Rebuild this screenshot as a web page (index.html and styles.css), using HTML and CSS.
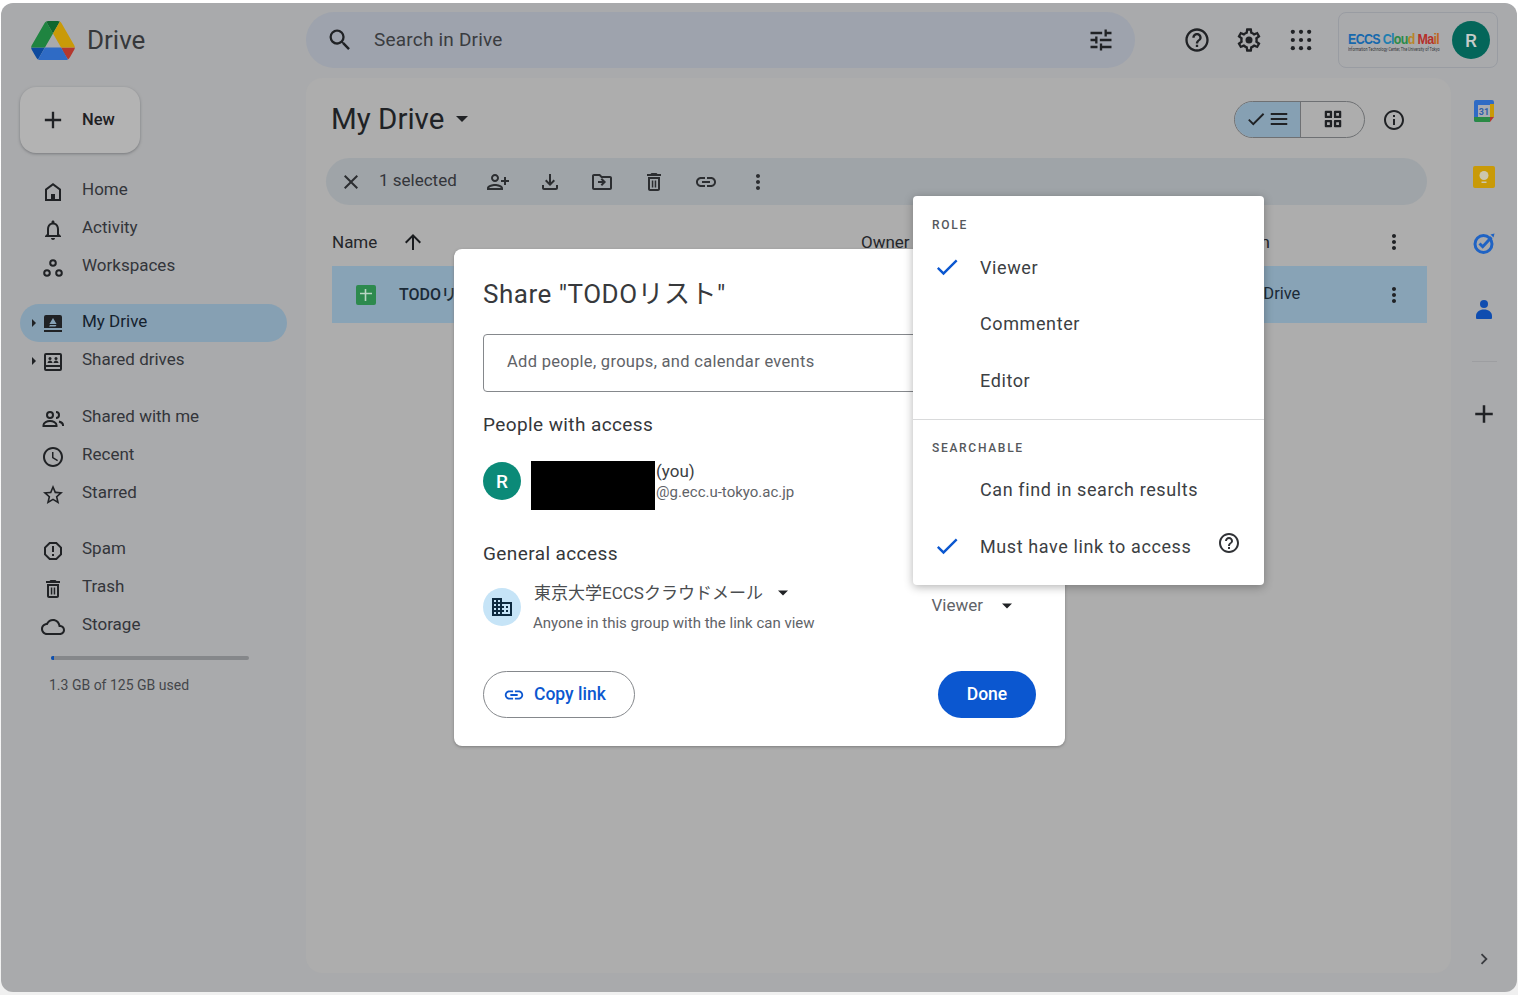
FILE: index.html
```html
<!DOCTYPE html>
<html>
<head>
    <meta charset="utf-8">
    <title>My Drive - Google Drive</title>
    <link rel="stylesheet" href="styles.css">
</head>
<body>
<svg class="sprite" xmlns="http://www.w3.org/2000/svg">
    <symbol id="i-search" viewBox="0 0 24 24"><path d="M15.5 14h-.79l-.28-.27A6.471 6.471 0 0 0 16 9.5 6.5 6.5 0 1 0 9.5 16c1.61 0 3.09-.59 4.23-1.57l.27.28v.79l5 4.99L20.49 19l-4.99-5zm-6 0C7.01 14 5 11.99 5 9.5S7.01 5 9.5 5 14 7.01 14 9.5 11.99 14 9.5 14z"/></symbol>
    <symbol id="i-tune" viewBox="0 0 24 24"><path d="M3 17v2h6v-2H3zM3 5v2h10V5H3zm10 16v-2h8v-2h-8v-2h-2v6h2zM7 9v2H3v2h4v2h2V9H7zm14 4v-2H11v2h10zm-6-4h2V7h4V5h-4V3h-2v6z"/></symbol>
    <symbol id="i-help" viewBox="0 0 24 24"><path d="M11 18h2v-2h-2v2zm1-16C6.48 2 2 6.48 2 12s4.48 10 10 10 10-4.48 10-10S17.52 2 12 2zm0 18c-4.41 0-8-3.59-8-8s3.59-8 8-8 8 3.59 8 8-3.59 8-8 8zm0-14c-2.21 0-4 1.79-4 4h2c0-1.1.9-2 2-2s2 .9 2 2c0 2-3 1.75-3 5h2c0-2.25 3-2.5 3-5 0-2.21-1.79-4-4-4z"/></symbol>
    <symbol id="i-settings" viewBox="0 0 24 24"><path d="M19.43 12.98c.04-.32.07-.64.07-.98 0-.34-.03-.66-.07-.98l2.11-1.65c.19-.15.24-.42.12-.64l-2-3.46c-.09-.16-.26-.25-.44-.25-.06 0-.12.01-.17.03l-2.49 1c-.52-.4-1.08-.73-1.69-.98l-.38-2.65C14.46 2.18 14.25 2 14 2h-4c-.25 0-.46.18-.49.42l-.38 2.65c-.61.25-1.17.59-1.69.98l-2.49-1c-.06-.02-.12-.03-.18-.03-.17 0-.34.09-.43.25l-2 3.46c-.13.22-.07.49.12.64l2.11 1.65c-.04.32-.07.65-.07.98 0 .33.03.66.07.98l-2.11 1.65c-.19.15-.24.42-.12.64l2 3.46c.09.16.26.25.44.25.06 0 .12-.01.17-.03l2.49-1c.52.4 1.08.73 1.69.98l.38 2.65c.03.24.24.42.49.42h4c.25 0 .46-.18.49-.42l.38-2.65c.61-.25 1.17-.59 1.69-.98l2.49 1c.06.02.12.03.18.03.17 0 .34-.09.43-.25l2-3.46c.12-.22.07-.49-.12-.64l-2.11-1.65zm-1.98-1.71c.04.31.05.52.05.73 0 .21-.02.43-.05.73l-.14 1.13.89.7 1.08.84-.7 1.21-1.27-.51-1.04-.42-.9.68c-.43.32-.84.56-1.25.73l-1.06.43-.16 1.13-.2 1.35h-1.4l-.19-1.35-.16-1.13-1.06-.43c-.43-.18-.83-.41-1.23-.71l-.91-.7-1.06.43-1.27.51-.7-1.21 1.08-.84.89-.7-.14-1.13c-.03-.31-.05-.54-.05-.74s.02-.43.05-.73l.14-1.13-.89-.7-1.08-.84.7-1.21 1.27.51 1.04.42.9-.68c.43-.32.84-.56 1.25-.73l1.06-.43.16-1.13.2-1.35h1.39l.19 1.35.16 1.13 1.06.43c.43.18.83.41 1.23.71l.91.7 1.06-.43 1.27-.51.7 1.21-1.07.85-.89.7.14 1.13z"/><circle cx="12" cy="12" r="3"/></symbol>
    <symbol id="i-apps" viewBox="0 0 24 24"><circle cx="5" cy="5" r="1.800"/><circle cx="12" cy="5" r="1.800"/><circle cx="19" cy="5" r="1.800"/><circle cx="5" cy="12" r="1.800"/><circle cx="12" cy="12" r="1.800"/><circle cx="19" cy="12" r="1.800"/><circle cx="5" cy="19" r="1.800"/><circle cx="12" cy="19" r="1.800"/><circle cx="19" cy="19" r="1.800"/></symbol>
    <symbol id="i-add" viewBox="0 0 24 24"><path d="M19 13h-6v6h-2v-6H5v-2h6V5h2v6h6v2z"/></symbol>
    <symbol id="i-home" viewBox="0 0 24 24"><path d="M12 3 4 9v12h16V9l-8-6zm6 16H6v-9l6-4.5 6 4.5v9z"/><path d="M10 14h4v5h-4z"/></symbol>
    <symbol id="i-bell" viewBox="0 0 24 24"><path d="M12 22c1.1 0 2-.9 2-2h-4c0 1.1.9 2 2 2zm6-6v-5c0-3.07-1.63-5.64-4.5-6.32V4c0-.83-.67-1.5-1.5-1.5s-1.5.67-1.5 1.5v.68C7.64 5.36 6 7.92 6 11v5l-2 2v1h16v-1l-2-2zm-2 1H8v-6c0-2.48 1.51-4.5 4-4.5s4 2.02 4 4.5v6z"/></symbol>
    <symbol id="i-workspaces" viewBox="0 0 24 24"><g fill="none" stroke="currentColor" stroke-width="2"><circle cx="12" cy="7" r="2.800"/><circle cx="6" cy="17" r="2.800"/><circle cx="18" cy="17" r="2.800"/></g></symbol>
    <symbol id="i-mydrive" viewBox="0 0 24 24"><path d="M5 3h14a2 2 0 0 1 2 2v11H3V5a2 2 0 0 1 2-2zM3 18h18v2H3z"/><path fill="#86a0b3" d="m12 6 3.600 6H8.400z"/><path fill="#86a0b3" d="M9 13h6.500l-1 1.500H8z"/></symbol>
    <symbol id="i-shared" viewBox="0 0 24 24"><path d="M5 3h14a2 2 0 0 1 2 2v14a2 2 0 0 1-2 2H5a2 2 0 0 1-2-2V5a2 2 0 0 1 2-2zm0 2v10h14V5H5zm0 12v2h14v-2H5z"/><circle cx="9" cy="8.500" r="1.500"/><circle cx="15" cy="8.500" r="1.500"/><path d="M6.500 13c0-1.500 1.500-2.500 2.500-2.500s2.500 1 2.500 2.500zM12.500 13c0-1.500 1.500-2.500 2.500-2.500s2.500 1 2.500 2.500z"/></symbol>
    <symbol id="i-people" viewBox="0 0 24 24"><g fill="none" stroke="currentColor" stroke-width="2"><circle cx="9" cy="8" r="3"/><path d="M2.500 19v-1c0-2.500 3.500-4 6.500-4s6.500 1.500 6.500 4v1z"/><path d="M15 5a3 3 0 0 1 0 6"/><path d="M18 14.500c2 .6 4 1.700 4 3.500v1"/></g></symbol>
    <symbol id="i-clock" viewBox="0 0 24 24"><path d="M11.990 2C6.470 2 2 6.480 2 12s4.470 10 9.990 10C17.520 22 22 17.520 22 12S17.520 2 11.990 2zM12 20c-4.420 0-8-3.580-8-8s3.580-8 8-8 8 3.580 8 8-3.580 8-8 8zm.5-13H11v6l5.250 3.150.75-1.230-4.500-2.670z"/></symbol>
    <symbol id="i-star" viewBox="0 0 24 24"><path d="M22 9.240l-7.190-.62L12 2 9.190 8.630 2 9.240l5.460 4.730L5.820 21 12 17.270 18.180 21l-1.630-7.030L22 9.240zM12 15.400l-3.760 2.270 1-4.280-3.320-2.880 4.380-.38L12 6.100l1.710 4.040 4.380.38-3.320 2.880 1 4.280L12 15.400z"/></symbol>
    <symbol id="i-spam" viewBox="0 0 24 24"><path d="M15.730 3H8.270L3 8.270v7.460L8.270 21h7.460L21 15.730V8.270L15.730 3zM19 14.900L14.900 19H9.100L5 14.900V9.100L9.100 5h5.800L19 9.100v5.800z"/><path d="M11 7h2v6h-2zM11 15h2v2h-2z"/></symbol>
    <symbol id="i-trash" viewBox="0 0 24 24"><path d="M6 19c0 1.100.9 2 2 2h8c1.100 0 2-.9 2-2V7H6v12zM8 9h8v10H8V9zm7.500-5l-1-1h-5l-1 1H5v2h14V4h-3.500z"/><path d="M9.800 10.500h1.500v7H9.800zM12.700 10.500h1.500v7h-1.500z"/></symbol>
    <symbol id="i-cloud" viewBox="0 0 24 24"><path d="M19.350 10.040C18.670 6.590 15.640 4 12 4 9.110 4 6.600 5.640 5.350 8.040 2.340 8.360 0 10.910 0 14c0 3.310 2.690 6 6 6h13c2.760 0 5-2.240 5-5 0-2.640-2.050-4.780-4.650-4.960zM19 18H6c-2.210 0-4-1.790-4-4 0-2.050 1.530-3.760 3.560-3.970l1.070-.11.5-.95C8.080 7.140 9.940 6 12 6c2.620 0 4.880 1.860 5.390 4.430l.3 1.500 1.530.11c1.560.1 2.780 1.410 2.780 2.960 0 1.650-1.350 3-3 3z"/></symbol>
    <symbol id="i-close" viewBox="0 0 24 24"><path d="M19 6.410L17.590 5 12 10.590 6.410 5 5 6.410 10.590 12 5 17.590 6.410 19 12 13.410 17.590 19 19 17.590 13.410 12z"/></symbol>
    <symbol id="i-personadd" viewBox="0 0 24 24"><path transform="matrix(-1 0 0 1 24 0)" d="M15 12c2.210 0 4-1.790 4-4s-1.790-4-4-4-4 1.790-4 4 1.790 4 4 4zm0-6c1.100 0 2 .9 2 2s-.9 2-2 2-2-.9-2-2 .9-2 2-2zm0 8c-2.670 0-8 1.340-8 4v2h16v-2c0-2.660-5.330-4-8-4zm-6 4c.22-.72 3.310-2 6-2 2.700 0 5.800 1.290 6 2H9zm-3-3v-3h3v-2H6V7H4v3H1v2h3v3h2z"/></symbol>
    <symbol id="i-download" viewBox="0 0 24 24"><path d="M18 15v3H6v-3H4v3c0 1.100.9 2 2 2h12c1.100 0 2-.9 2-2v-3h-2zm-1-4l-1.410-1.410L13 12.170V4h-2v8.170L8.410 9.590 7 11l5 5 5-5z"/></symbol>
    <symbol id="i-move" viewBox="0 0 24 24"><path d="M20 6h-8l-2-2H4c-1.100 0-2 .9-2 2v12c0 1.100.9 2 2 2h16c1.100 0 2-.9 2-2V8c0-1.100-.9-2-2-2zm0 12H4V6h5.170l2 2H20v10zm-7.990-2l4-4-4-4-1.400 1.410L12.200 11H8v2h4.200l-1.600 1.600z"/></symbol>
    <symbol id="i-link" viewBox="0 0 24 24"><path d="M3.900 12c0-1.710 1.390-3.100 3.100-3.100h4V7H7c-2.760 0-5 2.240-5 5s2.240 5 5 5h4v-1.900H7c-1.710 0-3.100-1.390-3.100-3.100zM8 13h8v-2H8v2zm9-6h-4v1.900h4c1.710 0 3.100 1.390 3.100 3.100s-1.390 3.100-3.100 3.100h-4V17h4c2.760 0 5-2.240 5-5s-2.240-5-5-5z"/></symbol>
    <symbol id="i-more" viewBox="0 0 24 24"><path d="M12 8c1.100 0 2-.9 2-2s-.9-2-2-2-2 .9-2 2 .9 2 2 2zm0 2c-1.100 0-2 .9-2 2s.9 2 2 2 2-.9 2-2-.9-2-2-2zm0 6c-1.100 0-2 .9-2 2s.9 2 2 2 2-.9 2-2-.9-2-2-2z"/></symbol>
    <symbol id="i-up" viewBox="0 0 24 24"><path d="M4 12l1.410 1.410L11 7.830V20h2V7.830l5.580 5.590L20 12l-8-8-8 8z"/></symbol>
    <symbol id="i-check" viewBox="0 0 24 24"><path d="M9 16.170L4.830 12l-1.420 1.410L9 19 21 7l-1.410-1.410z"/></symbol>
    <symbol id="i-menu" viewBox="0 0 24 24"><path d="M3 18.500h18v-2.200H3v2.200zm0-5.400h18v-2.200H3v2.200zM3 5.500v2.200h18V5.500H3z"/></symbol>
    <symbol id="i-grid" viewBox="0 0 24 24"><path d="M4 3h6a1 1 0 0 1 1 1v6a1 1 0 0 1-1 1H4a1 1 0 0 1-1-1V4a1 1 0 0 1 1-1zm1.500 2.500v3h3v-3h-3zM14 3h6a1 1 0 0 1 1 1v6a1 1 0 0 1-1 1h-6a1 1 0 0 1-1-1V4a1 1 0 0 1 1-1zm1.500 2.500v3h3v-3h-3zM4 13h6a1 1 0 0 1 1 1v6a1 1 0 0 1-1 1H4a1 1 0 0 1-1-1v-6a1 1 0 0 1 1-1zm1.500 2.500v3h3v-3h-3zM14 13h6a1 1 0 0 1 1 1v6a1 1 0 0 1-1 1h-6a1 1 0 0 1-1-1v-6a1 1 0 0 1 1-1zm1.500 2.500v3h3v-3h-3z"/></symbol>
    <symbol id="i-info" viewBox="0 0 24 24"><path d="M11 7h2v2h-2zm0 4h2v6h-2zm1-9C6.480 2 2 6.480 2 12s4.480 10 10 10 10-4.480 10-10S17.520 2 12 2zm0 18c-4.410 0-8-3.590-8-8s3.590-8 8-8 8 3.590 8 8-3.590 8-8 8z"/></symbol>
    <symbol id="i-domain" viewBox="0 0 24 24"><path d="M12 7V3H2v18h20V7H12zM6 19H4v-2h2v2zm0-4H4v-2h2v2zm0-4H4V9h2v2zm0-4H4V5h2v2zm4 12H8v-2h2v2zm0-4H8v-2h2v2zm0-4H8V9h2v2zm0-4H8V5h2v2zm10 12h-8v-2h2v-2h-2v-2h2v-2h-2V9h8v10zm-2-8h-2v2h2v-2zm0 4h-2v2h2v-2z"/></symbol>
    <symbol id="i-chevron" viewBox="0 0 24 24"><path d="M8.590 16.590L13.170 12 8.590 7.410 10 6l6 6-6 6z"/></symbol>
    <symbol id="i-caret" viewBox="0 0 24 24"><path d="M6 9h12l-6 6z"/></symbol>
</svg>

<div class="frame">
    <header class="topbar">
        <div class="brand">
            <svg class="drive-logo" viewBox="0 0 87.300 78">
                <path d="m6.600 66.850 3.850 6.650c.8 1.400 1.950 2.500 3.300 3.300l13.750-23.800h-27.500c0 1.550.4 3.100 1.200 4.500z" fill="#0d4a9e"/>
                <path d="m43.650 25-13.750-23.800c-1.350.8-2.500 1.900-3.300 3.300l-25.400 44a9.060 9.060 0 0 0 -1.200 4.500h27.500z" fill="#1f8440"/>
                <path d="m73.550 76.800c1.350-.8 2.500-1.900 3.300-3.300l1.600-2.750 7.650-13.250c.8-1.400 1.200-2.950 1.200-4.500h-27.502l5.852 11.500z" fill="#b4382e"/>
                <path d="m43.650 25 13.750-23.800c-1.350-.8-2.900-1.200-4.500-1.200h-18.500c-1.600 0-3.150.45-4.500 1.200z" fill="#10672f"/>
                <path d="m59.800 53h-32.300l-13.750 23.800c1.350.8 2.900 1.200 4.500 1.200h50.800c1.600 0 3.150-.45 4.500-1.200z" fill="#2f6bc5"/>
                <path d="m73.400 26.500-12.700-22c-.8-1.400-1.950-2.500-3.300-3.300l-13.750 23.800 16.150 28h27.450c0-1.550-.4-3.100-1.200-4.500z" fill="#c99a08"/>
            </svg>
            <span class="brand-name">Drive</span>
        </div>
        <div class="search">
            <svg class="icon big"><use href="#i-search"/></svg>
            <span class="search-text">Search in Drive</span>
            <svg class="icon big"><use href="#i-tune"/></svg>
        </div>
        <div class="top-icons">
            <svg class="icon big"><use href="#i-help"/></svg>
            <svg class="icon big"><use href="#i-settings"/></svg>
            <svg class="icon big"><use href="#i-apps"/></svg>
        </div>
        <div class="account">
            <div class="org">
                <div class="org-name"><span class="c1">ECCS</span> <span class="c2">Cl</span><span class="c3">ou</span><span class="c4">d</span> <span class="c5">Ma</span><span class="c6">il</span></div>
                <div class="org-sub">Information Technology Center, The University of Tokyo</div>
            </div>
            <div class="avatar dark">R</div>
        </div>
    </header>

    <div class="workspace">
        <nav class="sidebar">
            <button class="new-btn"><svg class="icon plus"><use href="#i-add"/></svg>New</button>
            <div class="nav-group">
                <div class="nav-item"><svg class="icon"><use href="#i-home"/></svg>Home</div>
                <div class="nav-item"><svg class="icon"><use href="#i-bell"/></svg>Activity</div>
                <div class="nav-item"><svg class="icon"><use href="#i-workspaces"/></svg>Workspaces</div>
            </div>
            <div class="nav-group tight">
                <div class="nav-item active"><span class="tree-caret"></span><svg class="icon"><use href="#i-mydrive"/></svg>My Drive</div>
                <div class="nav-item"><span class="tree-caret"></span><svg class="icon"><use href="#i-shared"/></svg>Shared drives</div>
            </div>
            <div class="nav-group tight">
                <div class="nav-item"><svg class="icon"><use href="#i-people"/></svg>Shared with me</div>
                <div class="nav-item"><svg class="icon"><use href="#i-clock"/></svg>Recent</div>
                <div class="nav-item"><svg class="icon"><use href="#i-star"/></svg>Starred</div>
            </div>
            <div class="nav-group">
                <div class="nav-item"><svg class="icon"><use href="#i-spam"/></svg>Spam</div>
                <div class="nav-item"><svg class="icon"><use href="#i-trash"/></svg>Trash</div>
                <div class="nav-item"><svg class="icon"><use href="#i-cloud"/></svg>Storage</div>
            </div>
            <div class="storage-bar"><div class="storage-fill"></div></div>
            <div class="storage-text">1.3 GB of 125 GB used</div>
        </nav>

        <main class="content">
            <div class="title-row">
                <h1 class="page-title">My Drive</h1>
                <svg class="icon title-caret"><use href="#i-caret"/></svg>
                <div class="view-toggle">
                    <div class="view-opt on"><svg class="icon small"><use href="#i-check"/></svg><svg class="icon small"><use href="#i-menu"/></svg></div>
                    <div class="view-opt"><svg class="icon small"><use href="#i-grid"/></svg></div>
                </div>
                <svg class="icon info"><use href="#i-info"/></svg>
            </div>

            <div class="selection-bar">
                <svg class="icon"><use href="#i-close"/></svg>
                <span class="sel-count">1 selected</span>
                <svg class="icon"><use href="#i-personadd"/></svg>
                <svg class="icon"><use href="#i-download"/></svg>
                <svg class="icon"><use href="#i-move"/></svg>
                <svg class="icon"><use href="#i-trash"/></svg>
                <svg class="icon"><use href="#i-link"/></svg>
                <svg class="icon"><use href="#i-more"/></svg>
            </div>

            <div class="file-head">
                <div class="col-name">Name <svg class="icon sort"><use href="#i-up"/></svg></div>
                <div class="col-owner">Owner</div>
                <div class="col-loc">Location</div>
                <svg class="icon"><use href="#i-more"/></svg>
            </div>
            <div class="file-row">
                <div class="col-name">
                    <svg class="sheet-icon" viewBox="0 0 20 20"><rect width="20" height="20" rx="2" fill="#2d8a4e"/><path d="M4 8.500h12M9.500 4v12" stroke="#b9d6c3" stroke-width="1.600" fill="none"/></svg>
                    <span class="file-name">TODOリスト</span>
                </div>
                <div class="col-owner">me</div>
                <div class="col-loc"><svg class="icon small"><use href="#i-mydrive"/></svg><span class="file-loc">My Drive</span></div>
                <svg class="icon"><use href="#i-more"/></svg>
            </div>
        </main>

        <aside class="rail">
            <svg class="rail-icon" viewBox="0 0 24 24">
                <path d="M2 3a2 2 0 0 1 2-2h16a2 2 0 0 1 2 2v15h-4v5H4a2 2 0 0 1-2-2z" fill="#2f6bc5"/>
                <rect x="6" y="6" width="12" height="12" fill="#a9acb2"/>
                <path d="M18 5h4v13h-4z" fill="#c99a08"/><path d="M2 18h16v5H4a2 2 0 0 1-2-2z" fill="#2a8a45"/><path d="M18 18h4l-4 5z" fill="#b4382e"/>
                <text x="12" y="15.500" class="cal-day">31</text>
            </svg>
            <svg class="rail-icon" viewBox="0 0 24 24">
                <rect x="1" y="1" width="22" height="22" rx="2" fill="#c99a08"/>
                <circle cx="12" cy="10.500" r="4.500" fill="#ccc6ae"/><rect x="9.500" y="16.500" width="5" height="1.500" fill="#ccc6ae"/>
            </svg>
            <svg class="rail-icon" viewBox="0 0 24 24">
                <circle cx="11.500" cy="13" r="8.500" fill="none" stroke="#1f63c4" stroke-width="3"/>
                <path d="M7.500 12.500l3.200 3.200 8.800-9.500" fill="none" stroke="#1f63c4" stroke-width="3"/>
                <path d="M16.500 2.500 23 2l-.5 6z" fill="#a9aaac"/><path d="M18.500 3.500 22.500 2.500l-1 4z" fill="#1f63c4"/>
            </svg>
            <svg class="rail-icon" viewBox="0 0 24 24">
                <circle cx="12" cy="7" r="4" fill="#0f4db0"/>
                <path d="M4 21v-2c0-4 3.500-6.500 8-6.500s8 2.500 8 6.500v2a1 1 0 0 1-1 1H5a1 1 0 0 1-1-1z" fill="#0f4db0"/>
            </svg>
            <div class="rail-line"></div>
            <svg class="icon rail-add"><use href="#i-add"/></svg>
            <svg class="icon small rail-chevron"><use href="#i-chevron"/></svg>
        </aside>
    </div>
</div>

<div class="share-dialog">
    <h2 class="share-title">Share "TODOリスト"</h2>
    <div class="share-input">Add people, groups, and calendar events</div>
    <div class="share-heading first">People with access</div>
    <div class="person">
        <div class="avatar teal">R</div>
        <div class="redacted"></div>
        <div class="person-text">
            <div class="person-you">(you)</div>
            <div class="person-mail">@g.ecc.u-tokyo.ac.jp</div>
        </div>
    </div>
    <div class="share-heading second">General access</div>
    <div class="access">
        <div class="access-icon"><svg class="icon"><use href="#i-domain"/></svg></div>
        <div class="access-text">
            <div class="access-name"><span class="access-label">東京大学ECCSクラウドメール</span><svg class="icon caret"><use href="#i-caret"/></svg></div>
            <div class="access-sub">Anyone in this group with the link can view</div>
        </div>
        <div class="access-role">Viewer<svg class="icon caret role-caret"><use href="#i-caret"/></svg></div>
    </div>
    <div class="share-foot">
        <button class="copy-btn"><svg class="icon"><use href="#i-link"/></svg>Copy link</button>
        <button class="done-btn">Done</button>
    </div>
</div>

<div class="role-menu">
    <div class="menu-section">
        <div class="menu-label">ROLE</div>
        <div class="menu-item"><svg class="icon check"><use href="#i-check"/></svg>Viewer</div>
        <div class="menu-item"><span class="check"></span>Commenter</div>
        <div class="menu-item"><span class="check"></span>Editor</div>
    </div>
    <div class="menu-section second">
        <div class="menu-label">SEARCHABLE</div>
        <div class="menu-item"><span class="check"></span>Can find in search results</div>
        <div class="menu-item"><svg class="icon check"><use href="#i-check"/></svg>Must have link to access<svg class="icon menu-help"><use href="#i-help"/></svg></div>
    </div>
</div>
</body>
</html>
```

FILE: styles.css
```css
html, body {
    margin: 0;
    padding: 0;
    height: 995px;
    overflow: hidden;
}
body {
    background: linear-gradient(#fff, #f0f0f0);
    font-family: Roboto, "Noto Sans CJK JP", sans-serif;
    color: #2f3134;
}
.sprite {
    display: none;
}
.icon {
    width: 24px;
    height: 24px;
    flex: none;
    fill: #202225;
    color: #202225;
}
.icon.big {
    width: 28px;
    height: 28px;
}
.icon.small {
    width: 22px;
    height: 22px;
}

.frame {
    margin: 3px 1px;
    height: 989px;
    display: flex;
    flex-direction: column;
    background: #a9aaac;
    border-radius: 12px;
    overflow: hidden;
}

/* top bar */
.topbar {
    height: 74px;
    flex: none;
    display: flex;
    align-items: center;
}
.brand {
    width: 305px;
    flex: none;
    padding-left: 30px;
    box-sizing: border-box;
    display: flex;
    align-items: center;
}
.drive-logo {
    width: 44px;
    height: 39px;
}
.brand-name {
    margin-left: 12px;
    font-size: 26px;
    color: #36383b;
}
.search {
    width: 829px;
    height: 56px;
    flex: none;
    box-sizing: border-box;
    padding: 0 20px;
    display: flex;
    align-items: center;
    background: #9ea3ad;
    border-radius: 28px;
}
.search-text {
    margin: -2px 0 0 20px;
    flex: 1;
    font-size: 19px;
    letter-spacing: .2px;
    color: #3a3c40;
}
.top-icons {
    margin-left: 48px;
    display: flex;
    gap: 24px;
}
.account {
    margin-left: 23px;
    width: 160px;
    height: 56px;
    flex: none;
    box-sizing: border-box;
    border: 1px solid #999ca2;
    border-radius: 8px;
    padding: 0 7px 0 9px;
    display: flex;
    align-items: center;
    justify-content: space-between;
}
.org {
    width: 92px;
    padding-top: 3px;
    overflow: hidden;
}
.org-name {
    font-family: "Liberation Sans", sans-serif;
    font-size: 15px;
    font-weight: bold;
    line-height: 15px;
    letter-spacing: -.8px;
    white-space: nowrap;
    transform: scaleX(.83);
    transform-origin: left;
}
.org-sub {
    font-size: 5px;
    line-height: 6px;
    white-space: nowrap;
    color: #33353a;
    transform: scaleX(.75);
    transform-origin: left;
}
.c1 { color: #1668ad; }
.c2 { color: #1f7fb0; }
.c3 { color: #2b8a4a; }
.c4 { color: #b8862a; }
.c5 { color: #b5302a; }
.c6 { color: #c0651f; }

.avatar {
    width: 38px;
    height: 38px;
    flex: none;
    border-radius: 50%;
    display: flex;
    align-items: center;
    justify-content: center;
    font-size: 19px;
    font-weight: 500;
}
.avatar.dark {
    background: #04665a;
    color: #c6cbc9;
}
.avatar.teal {
    background: #0b8a78;
    color: #fff;
}

/* columns under the top bar */
.workspace {
    flex: 1;
    display: flex;
    min-height: 0;
    margin-top: 1px;
}
.sidebar {
    width: 305px;
    flex: none;
    box-sizing: border-box;
    padding: 9px 0 0 19px;
}
.new-btn {
    width: 120px;
    height: 66px;
    display: flex;
    align-items: center;
    padding: 0 0 2px 19px;
    border: 0;
    border-radius: 16px;
    background: #b3b3b3;
    box-shadow: 0 1px 3px #77797c;
    font: 500 16.500px Roboto, sans-serif;
    color: #1e2023;
}
.plus {
    width: 28px;
    height: 28px;
    margin: 2px 15px 0 0;
}
.nav-group {
    margin-bottom: 19px;
}
.nav-group.tight + .nav-group.tight {
    margin-bottom: 18px;
}
.new-btn + .nav-group {
    margin-top: 19px;
    margin-bottom: 18px;
}
.nav-item {
    position: relative;
    width: 267px;
    height: 38px;
    box-sizing: border-box;
    padding: 0 0 4px 21px;
    display: flex;
    align-items: center;
    gap: 17px;
    font-size: 17px;
    line-height: 34px;
    color: #33353a;
    border-radius: 19px;
}
.nav-item.active {
    background: #86a0b3;
    color: #15222e;
}
.nav-item .icon {
    margin-top: 6px;
}
.tree-caret {
    position: absolute;
    left: 12px;
    top: 15px;
    border-left: 4px solid #202225;
    border-top: 4px solid transparent;
    border-bottom: 4px solid transparent;
}
.storage-bar {
    width: 198px;
    height: 4px;
    margin: -8px 0 0 31px;
    background: #85878a;
    border-radius: 2px;
    overflow: hidden;
}
.storage-fill {
    width: 3px;
    height: 4px;
    background: #0b4fb0;
}
.storage-text {
    margin: 16px 0 0 29px;
    font-size: 14px;
    line-height: 18px;
    color: #44464a;
}

/* main panel */
.content {
    flex: 1;
    margin-bottom: 19px;
    box-sizing: border-box;
    padding: 19px 24px 0 26px;
    background: #adadad;
    border-radius: 16px;
}
.title-row {
    height: 44px;
    display: flex;
    align-items: center;
}
.page-title {
    margin: 0 0 0 -1px;
    font-size: 29.500px;
    font-weight: 400;
    color: #202225;
}
.title-caret {
    margin-left: 6px;
}
.view-toggle {
    margin-left: auto;
    width: 131px;
    height: 37px;
    box-sizing: border-box;
    display: flex;
    border: 1px solid #6e7073;
    border-radius: 19px;
    overflow: hidden;
}
.view-opt {
    flex: 1;
    display: flex;
    align-items: center;
    justify-content: center;
    gap: 1px;
}
.view-opt.on {
    flex: none;
    width: 65px;
    background: #86a0b3;
    border-right: 1px solid #6e7073;
}
.info {
    margin: 2px 21px 0 17px;
}
.selection-bar {
    height: 47px;
    margin: 17px 0 0 -6px;
    padding-left: 13px;
    display: flex;
    align-items: center;
    gap: 28px;
    background: #9fa4a8;
    border-radius: 24px;
}
.selection-bar .icon {
    fill: #2c2e31;
}
.sel-count {
    margin: -3px 1px 0 -12px;
    font-size: 17px;
    color: #33353a;
}
.file-head, .file-row {
    display: flex;
    align-items: center;
    box-sizing: border-box;
    padding-right: 21px;
}
.file-head {
    height: 46px;
    margin-top: 15px;
    padding-bottom: 2px;
    font-size: 17px;
    color: #24262a;
}
.file-row {
    height: 57px;
    background: #88a3b6;
    font-size: 16.500px;
    color: #1b2a36;
}
.col-name {
    width: 529px;
    flex: none;
    display: flex;
    align-items: center;
}
.col-owner {
    width: 343px;
    flex: none;
}
.col-loc {
    flex: 1;
    display: flex;
    align-items: center;
    gap: 8px;
}
.file-row .col-name {
    padding-left: 24px;
    box-sizing: border-box;
    gap: 23px;
}
.file-row .col-loc {
    padding-left: 3px;
}
.file-name {
    margin-top: -3px;
    font-size: 16px;
    font-weight: 500;
}
.file-loc {
    margin-top: -3px;
}
.sort {
    margin-left: 24px;
    fill: #1a1c1f;
}
.sheet-icon {
    width: 20px;
    height: 20px;
    flex: none;
}

/* right rail */
.rail {
    width: 66px;
    flex: none;
    box-sizing: border-box;
    padding: 21px 0 22px;
    display: flex;
    flex-direction: column;
    align-items: center;
    gap: 42px;
}
.rail-icon {
    width: 24px;
    height: 24px;
    flex: none;
}
.cal-day {
    font: bold 9px Roboto, sans-serif;
    text-anchor: middle;
    fill: #2f5fa8;
}
.rail-line {
    width: 25px;
    height: 1px;
    margin-top: -2px;
    background: #9d9ea1;
}
.rail-add {
    width: 30px;
    height: 30px;
    margin-top: -5px;
}
.rail-chevron {
    margin-top: auto;
    fill: #3a3c40;
}

/* share dialog, lies over the page */
.share-dialog {
    position: absolute;
    left: 454px;
    top: 249px;
    width: 611px;
    height: 497px;
    box-sizing: border-box;
    padding: 29px 29px 0;
    background: #fff;
    border-radius: 8px;
    box-shadow: 0 1px 3px #7d7d7d;
    color: #3c4043;
}
.share-title {
    margin: 0;
    font-size: 26px;
    font-weight: 400;
    letter-spacing: .5px;
    line-height: 32px;
    color: #37393c;
}
.share-input {
    height: 58px;
    margin-top: 24px;
    box-sizing: border-box;
    padding: 0 0 3px 23px;
    display: flex;
    align-items: center;
    border: 1px solid #85888c;
    border-radius: 4px;
    font-size: 16.500px;
    letter-spacing: .3px;
    color: #5f6368;
}
.share-heading {
    font-size: 19px;
    line-height: 24px;
    letter-spacing: .4px;
    color: #35373a;
}
.share-heading.first {
    margin-top: 21px;
}
.share-heading.second {
    margin-top: 32px;
}
.person {
    display: flex;
    height: 49px;
    margin-top: 24px;
}
.person .avatar {
    margin-top: 1px;
}
.redacted {
    width: 124px;
    height: 49px;
    margin-left: 10px;
    background: #000;
}
.person-text {
    margin-left: 1px;
}
.person-you {
    font-size: 17px;
    line-height: 20px;
}
.person-mail {
    margin-top: 1px;
    font-size: 15px;
    line-height: 20px;
    color: #5f6368;
}
.access {
    display: flex;
    align-items: center;
    margin-top: 15px;
}
.access-icon {
    width: 38px;
    height: 38px;
    flex: none;
    display: flex;
    align-items: center;
    justify-content: center;
    border-radius: 50%;
    background: #c6e4f7;
}
.access-icon .icon {
    fill: #0d2a3f;
}
.access-text {
    margin-left: 12px;
}
.access-name {
    display: flex;
    align-items: center;
    height: 24px;
    font-size: 17px;
    color: #4a4d50;
}
.access-label {
    margin: -4px 0 0 1px;
}
.caret {
    width: 20px;
    height: 20px;
    margin-left: 10px;
}
.access-sub {
    margin-top: 8px;
    font-size: 15px;
    line-height: 20px;
    color: #5f6368;
}
.access-role {
    margin: -4px 19px 0 auto;
    display: flex;
    align-items: center;
    font-size: 17px;
    color: #5f6368;
}
.role-caret {
    margin: 2px 0 0 14px;
}
.share-foot {
    margin-top: 38px;
    display: flex;
    justify-content: space-between;
}
.copy-btn, .done-btn {
    height: 47px;
    box-sizing: border-box;
    border-radius: 24px;
    font: 500 17.500px Roboto, sans-serif;
    display: flex;
    align-items: center;
    padding-bottom: 2px;
}
.copy-btn {
    width: 152px;
    padding-left: 19px;
    gap: 9px;
    background: #fff;
    border: 1px solid #85888c;
    color: #0b57d0;
}
.copy-btn .icon {
    width: 22px;
    height: 22px;
    margin-top: 2px;
    fill: #0b57d0;
}
.done-btn {
    width: 98px;
    justify-content: center;
    background: #0b57d0;
    border: 0;
    color: #fff;
}

/* role menu, lies over the dialog */
.role-menu {
    position: absolute;
    left: 913px;
    top: 196px;
    width: 351px;
    height: 389px;
    background: #fff;
    border-radius: 4px;
    box-shadow: 0 2px 10px rgba(0, 0, 0, .3);
    color: #3c4043;
}
.menu-section {
    padding: 21px 0 10px;
}
.menu-section.second {
    padding-top: 20px;
    border-top: 1px solid #d9dadb;
}
.menu-label {
    padding-left: 19px;
    font-size: 12px;
    font-weight: 500;
    line-height: 16px;
    letter-spacing: 1.700px;
    color: #55585c;
}
.menu-label + .menu-item {
    margin-top: 6px;
}
.menu-item {
    height: 56.500px;
    padding-left: 20px;
    display: flex;
    align-items: center;
    font-size: 18px;
    letter-spacing: .6px;
}
.check {
    width: 28px;
    height: 28px;
    flex: none;
    margin-right: 19px;
    fill: #0b57d0;
}
.menu-help {
    margin: -6px 23px 0 auto;
    fill: #303236;
}
```
